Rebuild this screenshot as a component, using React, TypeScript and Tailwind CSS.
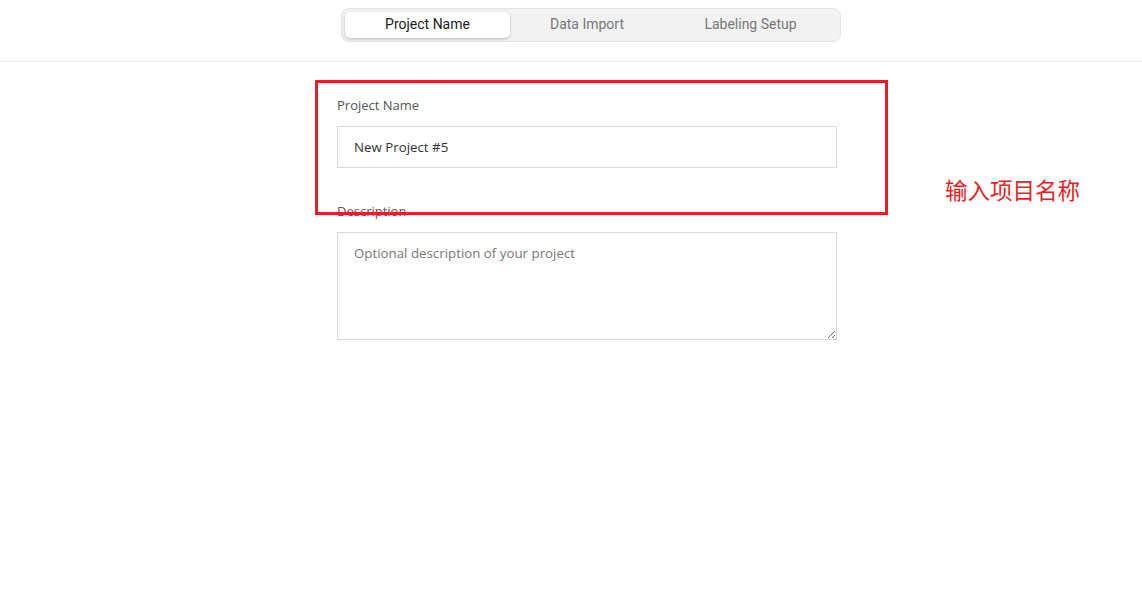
import React from "react";

export default function App() {
  return (
    <div className="relative min-h-[603px] w-full bg-white" style={{ fontFamily: "Roboto, 'Noto Sans', sans-serif" }}>
      <header className="flex h-[62px] justify-center border-b border-[#e8e8e8] pl-[40px] pt-[8px]">
        <div className="flex h-[34px] w-[500px] items-center rounded-[8px] border border-[#e3e3e3] bg-[#f2f2f2] px-[3px]">
          <div className="flex h-[26px] w-[165px] items-center justify-center rounded-[5px] bg-white pb-[1px] text-[14px] text-[#222] shadow-[0_1px_3px_rgba(0,0,0,0.25)]">
            Project Name
          </div>
          <div className="flex h-[26px] w-[154px] items-center justify-center pb-[1px] text-[14px] text-[#777]">Data Import</div>
          <div className="flex h-[26px] w-[173px] items-center justify-center pb-[1px] text-[14px] text-[#777]">Labeling Setup</div>
        </div>
      </header>

      <main className="flex justify-center pl-[32px] pt-[34px]" style={{ fontFamily: "'Open Sans', 'Noto Sans', sans-serif" }}>
        <div className="flex w-[500px] flex-col">
          <label className="mb-[12px] text-[13px] leading-[18px] text-[#555]">Project Name</label>
          <input
            readOnly
            value="New Project #5"
            className="h-[42px] w-full border border-[#d9d9d9] px-[16px] text-[13.3px] text-[#333] outline-none"
          />
          <label className="mb-[12px] mt-[34px] text-[13px] leading-[18px] text-[#555]">Description</label>
          <textarea
            placeholder="Optional description of your project"
            className="h-[108px] w-full border border-[#d9d9d9] px-[16px] pb-[10px] pt-[11px] text-[13.3px] text-[#333] outline-none placeholder:text-[#777]"
          />
        </div>
      </main>

      <div className="pointer-events-none absolute left-[315px] top-[80px] h-[135px] w-[573px] border-[3px] border-[#ec1c24]" />
      <div
        className="absolute left-[945px] top-[175px] text-[22.5px] leading-[28px] text-[#ec1c24]"
        style={{ fontFamily: "'Noto Sans CJK SC', sans-serif" }}
      >
        输入项目名称
      </div>
    </div>
  );
}
